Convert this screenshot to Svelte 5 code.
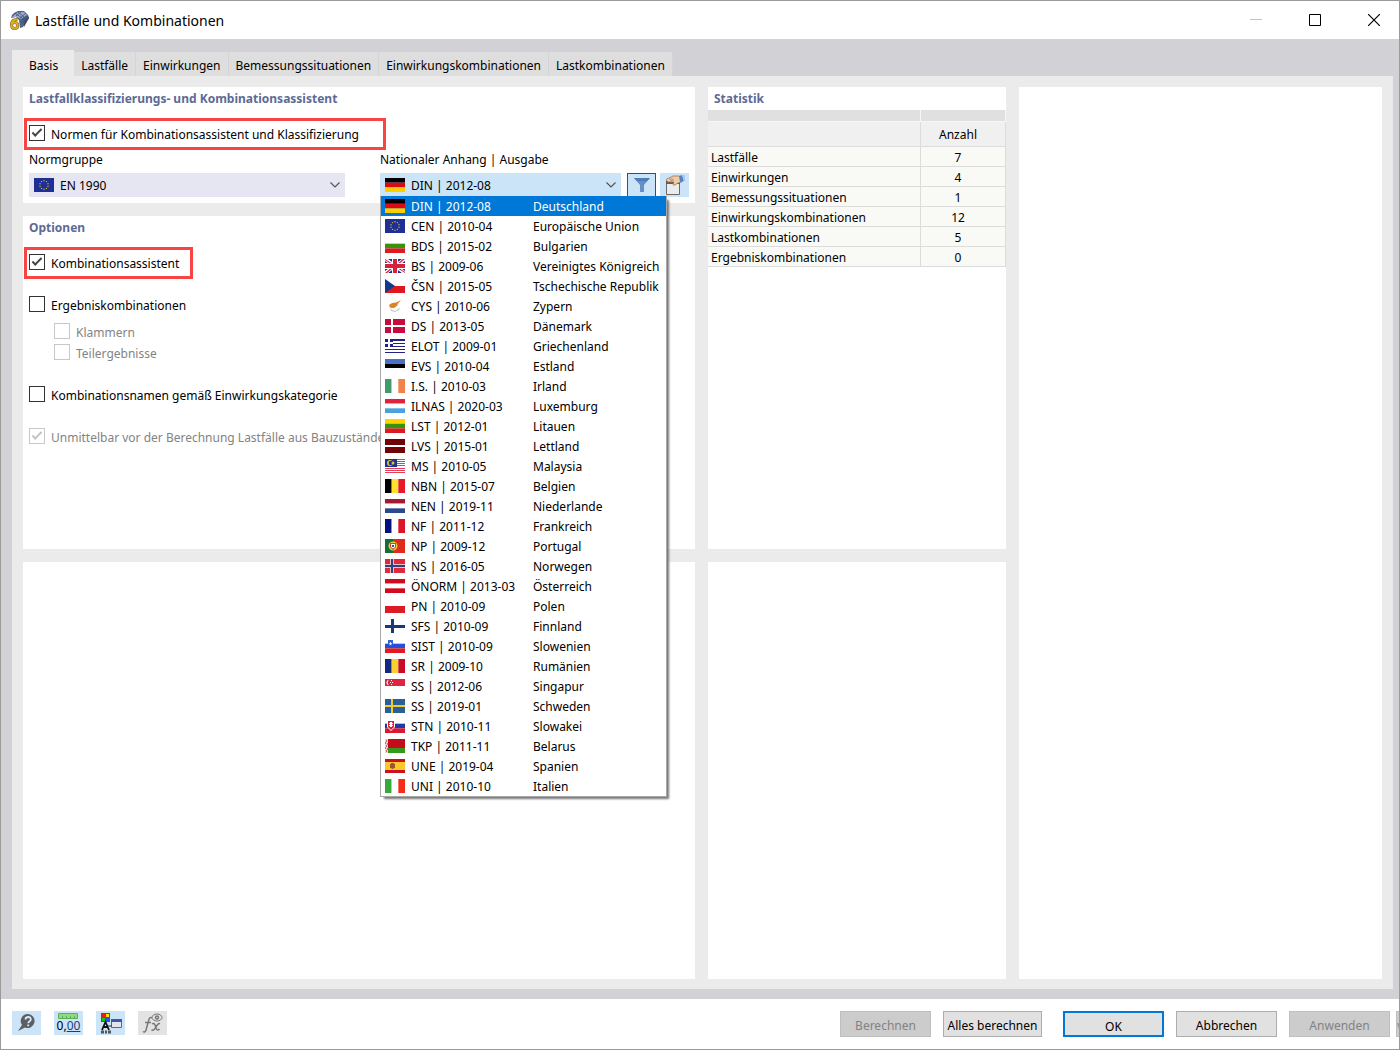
<script>
  // flags are lists of [fill, path] pairs on a 20x14 canvas
  const rows = (...colors) => {
    const size = 14 / colors.length;
    return colors.map((c, i) => [c, `M0 ${i * size}h20v${size}H0z`]);
  };
  const cols = (...colors) => {
    const size = 20 / colors.length;
    return colors.map((c, i) => [c, `M${i * size} 0h${size}v14h-${size}z`]);
  };
  const cross = (bg, color, x, y, w) => [
    [bg, 'M0 0h20v14H0z'],
    [color, `M${x} 0h${w}v14h-${w}zM0 ${y}h20v${w}H0z`],
  ];
  const dot = (x, y, r) => `M${x - r} ${y}a${r} ${r} 0 1 0 ${2 * r} 0a${r} ${r} 0 1 0 ${-2 * r} 0z`;
  const ring = Array.from({ length: 10 }, (_, i) => {
    const a = (i * Math.PI) / 5;
    return dot(10 + 4.2 * Math.sin(a), 7 - 4.2 * Math.cos(a), 0.7);
  }).join('');
  const eu = [['#1f2f93', 'M0 0h20v14H0z'], ['#c9b548', ring]];

  const norms = [
    { code: 'DIN | 2012-08', country: 'Deutschland', flag: rows('#000', '#dd0a15', '#ffce00') },
    { code: 'CEN | 2010-04', country: 'Europäische Union', flag: eu },
    { code: 'BDS | 2015-02', country: 'Bulgarien', flag: rows('#fff', '#35950a', '#dc1a20') },
    {
      code: 'BS | 2009-06',
      country: 'Vereinigtes Königreich',
      flag: [
        ['#22307e', 'M0 0h20v14H0z'],
        ['#fff', 'M0 0h3L20 12v2h-3L0 2zM20 0v2L3 14H0v-2L17 0z'],
        ['#d8203c', 'M0 0l8 5H6L0 1zM20 14l-8-5h2l6 4zM20 0h-2l-6 5h2zM0 14h2l6-5H6z'],
        ['#fff', 'M7 0h6v14H7zM0 4h20v6H0z'],
        ['#d8203c', 'M8 0h4v14H8zM0 5h20v4H0z'],
      ],
    },
    {
      code: 'ČSN | 2015-05',
      country: 'Tschechische Republik',
      flag: [...rows('#fff', '#dd1820'), ['#123a8c', 'M0 0l10 7L0 14z']],
    },
    {
      code: 'CYS | 2010-06',
      country: 'Zypern',
      flag: [
        ['#fff', 'M0 0h20v14H0z'],
        ['#df8224', 'M4 6l3-2 4-.5 5-2.500-3 3.500-1 2.500-3 2-4-.3z'],
        ['#bccbbb', 'M5 9l2 2 3 1v1l-4-1zM15 8l-1 3-4 2v-1l3-2z'],
      ],
    },
    { code: 'DS | 2013-05', country: 'Dänemark', flag: cross('#c60c3c', '#fff', 6, 6, 2) },
    {
      code: 'ELOT | 2009-01',
      country: 'Griechenland',
      flag: [
        ['#fff', 'M0 0h20v14H0z'],
        ['#25208c', 'M0 0h20v2H0zM0 4h20v1H0zM0 7h20v1H0zM0 10h20v1H0zM0 13h20v1H0zM0 0h8v8H0z'],
        ['#fff', 'M3 0h2v8H3zM0 3h8v2H0z'],
      ],
    },
    {
      code: 'EVS | 2010-04',
      country: 'Estland',
      flag: [['#4872c4', 'M0 0h20v5H0z'], ['#000', 'M0 5h20v4H0z'], ['#fff', 'M0 9h20v5H0z']],
    },
    { code: 'I.S. | 2010-03', country: 'Irland', flag: cols('#3f9c68', '#fff', '#f2814a') },
    { code: 'ILNAS | 2020-03', country: 'Luxemburg', flag: rows('#e2213d', '#fff', '#4aa1e0') },
    { code: 'LST | 2012-01', country: 'Litauen', flag: rows('#ffd200', '#35950a', '#dc1a20') },
    {
      code: 'LVS | 2015-01',
      country: 'Lettland',
      flag: [['#700406', 'M0 0h20v14H0z'], ['#fff', 'M0 6h20v2H0z']],
    },
    {
      code: 'MS | 2010-05',
      country: 'Malaysia',
      flag: [
        ['#fff', 'M0 0h20v14H0z'],
        ['#e0405c', 'M0 0h20v1H0zM0 2h20v1H0zM0 4h20v1H0zM0 6h20v1H0zM0 9h20v1H0zM0 11h20v1H0zM0 13h20v1H0z'],
        ['#22328c', 'M0 0h12v8H0z'],
        ['#d6c040', dot(5, 4, 3)],
        ['#22328c', dot(6, 4, 2.3)],
        ['#d6c040', dot(8, 4, 1.5)],
      ],
    },
    { code: 'NBN | 2015-07', country: 'Belgien', flag: cols('#000', '#ffe02c', '#e81828') },
    { code: 'NEN | 2019-11', country: 'Niederlande', flag: rows('#a51a32', '#fff', '#2a4a8e') },
    { code: 'NF | 2011-12', country: 'Frankreich', flag: cols('#04107c', '#fff', '#dc1428') },
    {
      code: 'NP | 2009-12',
      country: 'Portugal',
      flag: [
        ['#e02a1c', 'M0 0h20v14H0z'],
        ['#147038', 'M0 0h8v14H0z'],
        ['#ded23c', dot(8, 7, 4.5)],
        ['#d8402c', 'M5 4h6v4l-3 3-3-3z'],
        ['#fff', 'M6 5h4v3L8 9.500 6 8z'],
        ['#3c50a0', 'M7 6h2v2H7z'],
      ],
    },
    {
      code: 'NS | 2016-05',
      country: 'Norwegen',
      flag: [
        ...cross('#df2a3c', '#e8c0cc', 5, 5, 4),
        ['#30407c', 'M6 0h2v14H6zM0 6h20v2H0z'],
      ],
    },
    { code: 'ÖNORM | 2013-03', country: 'Österreich', flag: rows('#d20a20', '#fff', '#d20a20') },
    { code: 'PN | 2010-09', country: 'Polen', flag: rows('#fff', '#dc1c24') },
    { code: 'SFS | 2010-09', country: 'Finnland', flag: cross('#fff', '#183878', 6, 6, 3) },
    {
      code: 'SIST | 2010-09',
      country: 'Slowenien',
      flag: [
        ...rows('#fff', '#2050dc', '#e41820'),
        ['#2f62d8', 'M3 1h5v4L5.500 8 3 5z'],
        ['#fff', 'M4 5l1.500-2L7 5 5.500 6z'],
      ],
    },
    { code: 'SR | 2009-10', country: 'Rumänien', flag: cols('#14287c', '#fad030', '#c80c28') },
    {
      code: 'SS | 2012-06',
      country: 'Singapur',
      flag: [
        ...rows('#e02440', '#fff'),
        ['#fff', 'M4 1a2.500 2.500 0 1 0 0 5a3 3 0 0 1 0-5zM6 1h1v1H6zM5 3h1v1H5zM7 3h1v1H7zM6 5h1v1H6z'],
      ],
    },
    { code: 'SS | 2019-01', country: 'Schweden', flag: cross('#2a6098', '#f2cc2c', 6, 6, 2) },
    {
      code: 'STN | 2010-11',
      country: 'Slowakei',
      flag: [
        ...rows('#fff', '#2038a4', '#dc1830'),
        ['#fff', 'M2 2h8v6l-4 4-4-4z'],
        ['#d82038', 'M3 2h6v6l-3 3-3-3z'],
        ['#fff', 'M5 3h2v5H5zM4 4h4v1H4zM4 6h4v1H4z'],
      ],
    },
    {
      code: 'TKP | 2011-11',
      country: 'Belarus',
      flag: [
        ['#c40c1c', 'M0 0h20v9H0z'],
        ['#38981c', 'M0 9h20v5H0z'],
        ['#f0d0d4', 'M0 0h3v14H0z'],
        ['#d86070', 'M1 1h1v2H1zM0 3h1v2H0zM2 4h1v2H2zM1 6h1v2H1zM0 8h1v2H0zM2 9h1v2H2zM1 11h1v2H1z'],
      ],
    },
    {
      code: 'UNE | 2019-04',
      country: 'Spanien',
      flag: [
        ['#cc1020', 'M0 0h20v14H0z'],
        ['#fac828', 'M0 3h20v8H0z'],
        ['#a05430', 'M5 5h1v4H5zM6 4h3v5l-1 1H7L6 9zM9 5h1v4H9z'],
      ],
    },
    { code: 'UNI | 2010-10', country: 'Italien', flag: cols('#38a838', '#fff', '#f42c18') },
  ];

  const tabs = [
    'Basis',
    'Lastfälle',
    'Einwirkungen',
    'Bemessungssituationen',
    'Einwirkungskombinationen',
    'Lastkombinationen',
  ];

  const stats = [
    ['Lastfälle', 7],
    ['Einwirkungen', 4],
    ['Bemessungssituationen', 1],
    ['Einwirkungskombinationen', 12],
    ['Lastkombinationen', 5],
    ['Ergebniskombinationen', 0],
  ];

  let activeTab = $state('Basis');
  let selected = $state(norms[0].code);
  let listOpen = $state(true);
  let current = $derived(norms.find((n) => n.code === selected));

  function pick(code) {
    selected = code;
    listOpen = false;
  }
</script>

{#snippet flagIcon(shapes)}
  <svg class="flag" viewBox="0 0 20 14" width="20" height="14" aria-hidden="true">
    {#each shapes as [fill, d]}
      <path {fill} {d} />
    {/each}
  </svg>
{/snippet}

{#snippet chevron()}
  <svg class="chevron" viewBox="0 0 10 6" width="10" height="6" aria-hidden="true">
    <path d="M.5.5L5 5l4.500-4.500" fill="none" stroke="#555" stroke-width="1.200" />
  </svg>
{/snippet}

<div class="window">
  <header class="titlebar">
    <svg width="20" height="20" viewBox="0 0 20 20" aria-hidden="true">
      <path d="M2 8q0-3 3-5l4-2 6 0 4 4 1 3-5 8q-2 2-4 2l-1-8-3-3z" fill="#4f648c" />
      <path d="M3 7l6-5 6 0 3 3-6 4-4-2z" fill="#9aabca" />
      <path d="M6 3l7 5M9 2l6 5M13 1L7 6M17 3l-6 5M12 10l6-4M12 13l6-5M15 7v7" stroke="#3c5078" stroke-width=".8" />
      <path d="M15 12l4-6 1 2-5 9z" fill="#434a5c" />
      <path d="M8.500 9.500Q3 9 2.500 14.500q0 4 3 4 3.200 0 3.200-3t-3-3q-2.200 0-3.200 2" fill="none" stroke="#7c6420" stroke-width="3" />
      <path d="M8.500 9.500Q3 9 2.500 14.500q0 4 3 4 3.200 0 3.200-3t-3-3q-2.200 0-3.200 2" fill="none" stroke="#dcb024" stroke-width="2" />
    </svg>
    <h1>Lastfälle und Kombinationen</h1>
    <div class="window-buttons">
      <button aria-label="Minimieren" disabled>
        <svg width="12" height="12" viewBox="0 0 12 12"><path d="M0 5.500h12" stroke="#c4c4c4" /></svg>
      </button>
      <button aria-label="Maximieren">
        <svg width="12" height="12" viewBox="0 0 12 12"><path d="M.5.5h11v11H.5z" fill="none" stroke="#000" /></svg>
      </button>
      <button aria-label="Schließen">
        <svg width="12" height="12" viewBox="0 0 12 12"><path d="M0 0l12 12M12 0L0 12" stroke="#000" stroke-width="1.200" /></svg>
      </button>
    </div>
  </header>

  <main>
    <div class="tabs" role="tablist">
      {#each tabs as tab}
        <button
          role="tab"
          class:active={tab === activeTab}
          aria-selected={tab === activeTab}
          onclick={() => (activeTab = tab)}>{tab}</button>
      {/each}
    </div>

    <div class="page">
      <section class="panel assistant">
        <h2>Lastfallklassifizierungs- und Kombinationsassistent</h2>
        <label class="check highlight">
          <input type="checkbox" checked />
          <span>Normen für Kombinationsassistent und Klassifizierung</span>
        </label>
        <div class="fields">
          <div class="field">
            <label for="group">Normgruppe</label>
            <div class="combo">
              {@render flagIcon(eu)}
              <select id="group">
                <option>EN 1990</option>
              </select>
              {@render chevron()}
            </div>
          </div>
          <div class="field">
            <label for="annex">Nationaler Anhang | Ausgabe</label>
            <div class="annex-row">
              <div class="combo open">
                {@render flagIcon(current.flag)}
                <select id="annex" bind:value={selected}>
                  {#each norms as norm}
                    <option value={norm.code}>{norm.code}</option>
                  {/each}
                </select>
                {@render chevron()}
              </div>
              <button class="tool filter" aria-label="Filter">
                <svg width="18" height="16" viewBox="0 0 18 16">
                  <path d="M1 1h16l-6 7v7H7V8z" fill="#668fc8" />
                  <path d="M1 1h16l-3 3H4z" fill="#4d7cba" />
                </svg>
              </button>
              <button class="tool" aria-label="Bearbeiten">
                <svg width="22" height="20" viewBox="0 0 22 20">
                  <path d="M2.500 8.500h13v11h-13z" fill="#ececec" stroke="#6a6a6a" />
                  <path d="M2 6h14v3H2z" fill="#5e5e5e" />
                  <path d="M2 5q1-2 3-2l4-2h6l3 2v4l-4 1-3 2q-2 1-2-1l1-2H6L4 7z" fill="#f0cba8" stroke="#94694c" stroke-width=".7" />
                  <path d="M5 4l4 0M6 6l4-1" stroke="#94694c" stroke-width=".6" />
                  <path d="M15 1l3-1 2 6-4 1z" fill="#4f84cc" />
                  <path d="M18 0h3v6h-1z" fill="#a9cbed" />
                </svg>
              </button>
              {#if listOpen}
                <ul class="dropdown" role="listbox" aria-label="Nationaler Anhang">
                  {#each norms as norm}
                    <li role="option" aria-selected={norm.code === selected}>
                      <button class:selected={norm.code === selected} onclick={() => pick(norm.code)}>
                        {@render flagIcon(norm.flag)}
                        <span class="code">{norm.code}</span>
                        <span>{norm.country}</span>
                      </button>
                    </li>
                  {/each}
                </ul>
              {/if}
            </div>
          </div>
        </div>
      </section>

      <section class="panel options">
        <h2>Optionen</h2>
        <label class="check highlight">
          <input type="checkbox" checked />
          <span>Kombinationsassistent</span>
        </label>
        <div class="group">
          <label class="check">
            <input type="checkbox" />
            <span>Ergebniskombinationen</span>
          </label>
          <div class="nested">
            <label class="check disabled">
              <input type="checkbox" disabled />
              <span>Klammern</span>
            </label>
            <label class="check disabled">
              <input type="checkbox" disabled />
              <span>Teilergebnisse</span>
            </label>
          </div>
        </div>
        <label class="check spaced">
          <input type="checkbox" />
          <span>Kombinationsnamen gemäß Einwirkungskategorie</span>
        </label>
        <label class="check spaced disabled">
          <input type="checkbox" checked disabled />
          <span>Unmittelbar vor der Berechnung Lastfälle aus Bauzuständen</span>
        </label>
      </section>

      <section class="panel bottom"></section>

      <section class="panel statistics">
        <h2>Statistik</h2>
        <table>
          <thead>
            <tr class="strip"><td></td><td></td></tr>
            <tr><td></td><th>Anzahl</th></tr>
          </thead>
          <tbody>
            {#each stats as [name, count]}
              <tr>
                <td>{name}</td>
                <td class="count">{count}</td>
              </tr>
            {/each}
          </tbody>
        </table>
      </section>

      <section class="panel bottom"></section>
      <section class="panel preview"></section>
    </div>
  </main>

  <footer>
    <div class="tools">
      <button class="tool" aria-label="Hilfe">
        <svg width="20" height="20" viewBox="0 0 20 20">
          <path d="M11 1a7 7 0 1 1-3 13.500L1 18l4-6A7 7 0 0 1 11 1z" fill="#5c5e62" />
          <path d="M8.500 6.500q0-2.500 2.700-2.500t2.600 2.300q0 1.500-1.500 2.200-1 .6-1 1.700M11.200 11.500v1.700" fill="none" stroke="#dbe9f6" stroke-width="1.800" />
        </svg>
      </button>
      <button class="tool" aria-label="Einheiten und Dezimalstellen">
        <span class="units">
          <svg width="20" height="6" viewBox="0 0 20 6">
            <path d="M.5.5h19v5H.5z" fill="#8edc80" stroke="#5eae56" />
            <path d="M4.500 3v3M8.500 3v3M12.500 3v3M16.500 3v3" stroke="#5eae56" />
          </svg>
          <span>0,<u>00</u></span>
        </span>
      </button>
      <button class="tool" aria-label="Anzeigeeigenschaften">
        <svg width="22" height="22" viewBox="0 0 22 22">
          <path d="M1 1h9v9H1z" fill="#555" />
          <path d="M2 2h3v3H2z" fill="#f01818" />
          <path d="M6 2h3v3H6z" fill="#ffe000" />
          <path d="M2 6h3v3H2z" fill="#10c820" />
          <path d="M6 6h3v3H6z" fill="#3048f0" />
          <path d="M2 18L5.500 10 9 18M3 15h5" fill="none" stroke="#111" stroke-width="1.800" />
          <path d="M1 20h3M5 20h2M8 20h3" stroke="#555" stroke-width="3" />
          <path d="M11.500 7.500h10v8h-10z" fill="#e4e4ec" stroke="#667" />
          <path d="M11 7h11v3H11z" fill="#3a5aa8" />
          <path d="M8 14h4" stroke="#333" />
        </svg>
      </button>
      <button class="tool inactive" aria-label="Formel" disabled>
        <svg width="22" height="22" viewBox="0 0 22 22" fill="none" stroke="#777">
          <path d="M10 6q-2.500-2-3.500 3L4 18q-1 3-3 1.500M3 10.500h6" stroke-width="1.500" />
          <path d="M10 12q2-1.500 3 1l1.500 4q1 2 3 0M18 11.500q-2-.5-4 3.500T9.500 18" stroke-width="1.500" />
          <ellipse cx="15" cy="5.500" rx="5" ry="3.500" />
          <circle cx="15" cy="5.500" r="1.500" stroke-width="1.500" />
        </svg>
      </button>
    </div>
    <div class="actions">
      <button class="short" disabled>Berechnen</button>
      <button class="medium">Alles berechnen</button>
      <button class="primary">OK</button>
      <button>Abbrechen</button>
      <button disabled>Anwenden</button>
      <button class="cut" disabled>v</button>
    </div>
  </footer>
</div>

<style>
  :global(body) {
    background: #fff;
  }
  .window {
    display: flex;
    flex-direction: column;
    box-sizing: border-box;
    min-height: 100vh;
    border: 1px solid #9b9b9b;
    background: #fff;
    color: #000;
    font-family: 'Noto Sans', 'Open Sans', sans-serif;
    font-size: 12px;
    line-height: 20px;
  }
  button,
  select {
    margin: 0;
    padding: 0;
    border: 0;
    border-radius: 0;
    background: none;
    color: inherit;
    font: inherit;
  }
  svg {
    display: block;
    flex: none;
  }
  .titlebar {
    display: flex;
    align-items: center;
    gap: 6px;
    height: 38px;
    padding-left: 8px;
  }
  h1 {
    flex: 1;
    margin: 0;
    padding-top: 2px;
    font-size: 14px;
    font-weight: 400;
  }
  .window-buttons {
    display: flex;
    gap: 9px;
  }
  .window-buttons button {
    display: flex;
    align-items: center;
    justify-content: center;
    width: 50px;
    height: 38px;
  }
  main {
    flex: 1;
    display: flex;
    flex-direction: column;
    padding: 11px 6px 10px 11px;
    background: #d1d1d6;
  }
  .tabs {
    display: flex;
    align-items: flex-end;
  }
  .tabs button {
    height: 24px;
    padding: 4px 7px 0;
    border-right: 1px solid #d4d4d6;
    background: #dedede;
  }
  .tabs button.active {
    height: 26px;
    padding: 6px 16px 0 17px;
    border: 0;
    background: #ebebeb;
  }
  .page {
    flex: 1;
    display: grid;
    grid-template-columns: 672fr 298fr 363fr;
    grid-template-rows: auto 333fr 417fr;
    grid-template-areas:
      'assistant statistics preview'
      'options statistics preview'
      'left middle preview';
    gap: 13px;
    padding: 11px 11px 10px;
    background: #ebebeb;
  }
  .panel {
    min-width: 0;
    padding: 0 6px;
    background: #fff;
  }
  .assistant {
    grid-area: assistant;
    padding-bottom: 6px;
  }
  .options {
    grid-area: options;
  }
  .statistics {
    grid-area: statistics;
    padding: 0;
  }
  .preview {
    grid-area: preview;
  }
  h2 {
    margin: 0;
    color: #5c6b95;
    font-size: 12px;
    font-weight: 700;
    line-height: 23px;
  }
  .statistics h2 {
    padding-left: 6px;
  }
  .check {
    display: flex;
    align-items: center;
    gap: 6px;
    white-space: nowrap;
  }
  .check span {
    padding-top: 4px;
    line-height: 16px;
  }
  .check input {
    flex: none;
    appearance: none;
    display: grid;
    place-items: center;
    width: 16px;
    height: 16px;
    margin: 0;
    border: 1px solid #333;
    background: #fff;
  }
  .check input:checked::before {
    content: '';
    width: 10px;
    height: 5px;
    margin-bottom: 4px;
    box-sizing: border-box;
    border-left: 2px solid #444;
    border-bottom: 2px solid #444;
    transform: rotate(-45deg);
  }
  .check.disabled {
    color: #838383;
  }
  .check.disabled input {
    border-color: #c8c8c8;
  }
  .check.disabled input::before {
    border-color: #c4c4c4;
  }
  .highlight {
    width: fit-content;
    height: 24px;
    margin: 8px 0 0 -5px;
    padding: 0 24px 2px 2px;
    border: 3px solid #f94444;
  }
  .options .highlight {
    padding-right: 11px;
  }
  .group {
    margin-top: 15px;
  }
  .nested {
    display: grid;
    gap: 1px;
    margin: 7px 0 0 25px;
  }
  .spaced {
    margin-top: 22px;
  }
  .fields {
    display: grid;
    grid-template-columns: 316fr 309fr;
    gap: 35px;
  }
  .field {
    min-width: 0;
  }
  .field label {
    display: block;
    margin-bottom: 3px;
  }
  .combo {
    flex: 1;
    display: flex;
    align-items: center;
    gap: 6px;
    height: 24px;
    padding: 0 5px;
    background: #e5e6f1;
  }
  .combo.open {
    background: #cce4f7;
  }
  .combo select {
    flex: 1;
    min-width: 0;
    height: 24px;
    padding-top: 2px;
    appearance: none;
  }
  .annex-row {
    position: relative;
    display: flex;
    gap: 4px;
  }
  .annex-row .combo {
    margin-right: 2px;
  }
  .tool {
    display: flex;
    flex: none;
    align-items: center;
    justify-content: center;
    width: 29px;
    height: 24px;
    background: #cce4f7;
  }
  .tool.filter {
    border: 1px solid #1c5690;
  }
  .tool.inactive {
    background: #e3e3e3;
  }
  .dropdown {
    position: absolute;
    top: 23px;
    left: 0;
    z-index: 1;
    width: 285px;
    margin: 0;
    padding: 0;
    border: 1px solid #a8a8a8;
    border-top: 0;
    background: #fff;
    box-shadow: 3px 3px 2px -1px #777;
    list-style: none;
  }
  .dropdown button {
    display: flex;
    align-items: center;
    width: 100%;
    height: 20px;
    padding-left: 4px;
    text-align: left;
    white-space: nowrap;
  }
  .dropdown button.selected {
    background: #0078d7;
    color: #fff;
  }
  .dropdown span {
    padding-top: 2px;
    line-height: 18px;
  }
  .dropdown .code {
    flex: none;
    width: 122px;
    margin-left: 6px;
  }
  table {
    width: 100%;
    border-collapse: collapse;
    table-layout: fixed;
  }
  td,
  th {
    height: 17px;
    padding: 2px 3px 0;
    border: 1px solid #dcdcdc;
    border-width: 0 1px 1px 0;
    background: #f9f9f5;
    line-height: 17px;
  }
  th,
  .count {
    text-align: center;
  }
  thead td,
  thead th {
    height: 24px;
    padding-top: 0;
    background: #f0f0f0;
    font-weight: 400;
  }
  thead th,
  tbody .count {
    padding-right: 13px;
  }
  thead td:first-child {
    width: 206px;
  }
  .strip td {
    height: 11px;
    border-color: #f6f6f6;
    background: #e0e0e0;
  }
  footer {
    display: flex;
    justify-content: space-between;
    height: 38px;
    padding: 12px 0 0 11px;
  }
  .tools {
    display: flex;
    gap: 13px;
  }
  .units {
    display: grid;
    justify-items: center;
    line-height: 14px;
  }
  .units u {
    color: #1c3c80;
  }
  .actions {
    display: flex;
    gap: 12px;
  }
  .actions button {
    box-sizing: border-box;
    width: 101px;
    height: 26px;
    padding-top: 4px;
    border: 1px solid #adadad;
    background: #e1e1e1;
    white-space: nowrap;
  }
  .actions button:disabled {
    border-color: #bfbfbf;
    background: #ccc;
    color: #838383;
  }
  .actions .short {
    width: 91px;
  }
  .actions .medium {
    width: 99px;
    margin-right: 9px;
  }
  .actions .primary {
    border: 2px solid #0078d7;
  }
  .actions .cut {
    width: 3px;
    margin-left: -6px;
    border-right: 0;
    overflow: hidden;
  }
</style>
